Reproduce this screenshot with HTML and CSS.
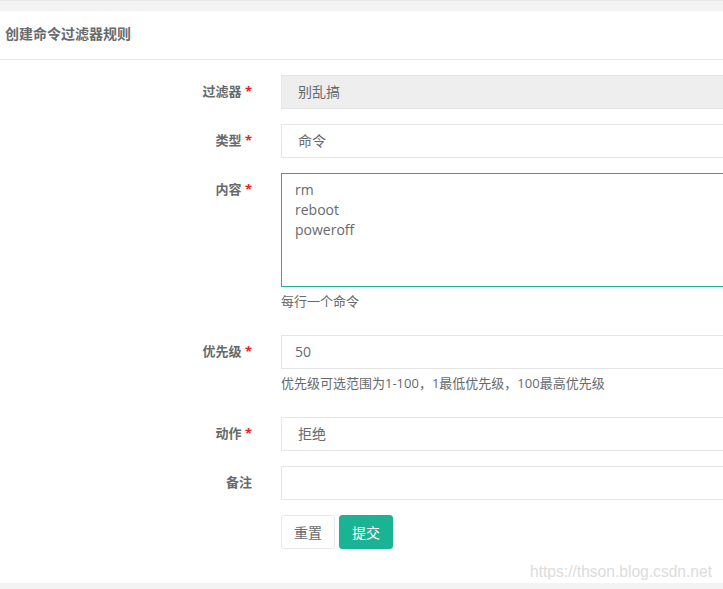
FILE: index.html
```html
<!DOCTYPE html>
<html lang="zh-CN">
<head>
<meta charset="utf-8">
<title>创建命令过滤器规则</title>
<link rel="stylesheet" href="styles.css">
</head>
<body>
<div class="page">
  <div class="panel">
    <div class="panel-title">创建命令过滤器规则</div>
    <div class="panel-body">
      <form class="form">
        <div class="row">
          <label class="label">过滤器 <span class="req">*</span></label>
          <div class="field"><div class="control select disabled">别乱搞</div></div>
        </div>
        <div class="row">
          <label class="label">类型 <span class="req">*</span></label>
          <div class="field"><div class="control select">命令</div></div>
        </div>
        <div class="row">
          <label class="label">内容 <span class="req">*</span></label>
          <div class="field">
            <div class="control textarea">rm<br>reboot<br>poweroff</div>
            <div class="help">每行一个命令</div>
          </div>
        </div>
        <div class="row">
          <label class="label">优先级 <span class="req">*</span></label>
          <div class="field">
            <div class="control input">50</div>
            <div class="help">优先级可选范围为1-100，1最低优先级，100最高优先级</div>
          </div>
        </div>
        <div class="row">
          <label class="label">动作 <span class="req">*</span></label>
          <div class="field"><div class="control select">拒绝</div></div>
        </div>
        <div class="row">
          <label class="label">备注</label>
          <div class="field"><div class="control input"></div></div>
        </div>
        <div class="row">
          <div class="label"></div>
          <div class="field buttons">
            <button type="button" class="btn btn-default">重置</button>
            <button type="button" class="btn btn-primary">提交</button>
          </div>
        </div>
      </form>
    </div>
  </div>
  <div class="watermark">https://thson.blog.csdn.net</div>
</div>
</body>
</html>
```

FILE: styles.css
```css
html, body {
  margin: 0;
  padding: 0;
  overflow: hidden;
}
body {
  background: #f3f3f4;
  font-family: "Open Sans", "Noto Sans CJK SC", sans-serif;
  color: #676a6c;
  font-size: 13px;
}
.page {
  position: relative;
  height: 589px;
  border-top: 1px solid #e9eaec;
  box-sizing: border-box;
  padding-top: 10px;
}
.panel {
  background: #fff;
  overflow: hidden;
  height: 572px;
}
.panel-title {
  padding: 14px 5px 16px;
  font-size: 14px;
  line-height: 18px;
  font-weight: bold;
  border-bottom: 1px solid #e7eaec;
}
.panel-body {
  padding-top: 15px;
}
.form {
  display: flex;
  flex-direction: column;
  gap: 15px;
}
.row {
  display: grid;
  grid-template-columns: 266px 600px;
}
.label {
  text-align: right;
  padding: 7px 14px 0 0;
  font-weight: bold;
  line-height: 18px;
}
.req {
  color: #ed1c24;
  font-weight: bold;
}
.field {
  padding-left: 15px;
}
.control {
  box-sizing: border-box;
  border: 1px solid #e5e6e7;
  background: #fff;
  height: 34px;
  font-size: 14px;
  line-height: 32px;
  color: #676a6c;
  padding: 0 13px;
}
.select {
  padding-left: 16px;
}
.disabled {
  background: #eee;
}
.textarea {
  height: 114px;
  border-color: #1ab394;
  line-height: 20px;
  padding-top: 6px;
}
.help {
  margin-top: 5px;
  margin-bottom: 10px;
  line-height: 18px;
  color: #676a6c;
  font-size: 13px;
}
.buttons {
  display: flex;
  gap: 4px;
}
.btn {
  box-sizing: border-box;
  height: 34px;
  width: 54px;
  border-radius: 3px;
  font-family: inherit;
  font-size: 14px;
  padding: 0;
  cursor: pointer;
}
.btn-default {
  background: #fff;
  border: 1px solid #e7eaec;
  color: #676a6c;
}
.btn-primary {
  background: #1ab394;
  border: 1px solid #1ab394;
  color: #fff;
}
.watermark {
  position: absolute;
  left: 530px;
  top: 561px;
  font-family: "Liberation Sans", sans-serif;
  font-size: 15.6px;
  line-height: 20px;
  color: #dcdcdc;
}
```
